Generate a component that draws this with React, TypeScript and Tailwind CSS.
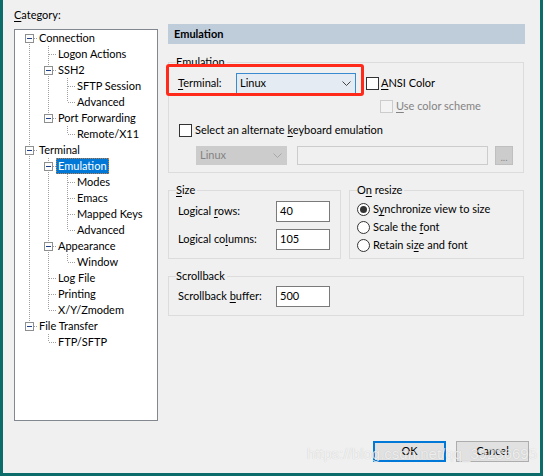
import React from "react";

type TreeNode = { label: string; children?: TreeNode[]; selected?: boolean };

const tree: TreeNode[] = [
  {
    label: "Connection",
    children: [
      { label: "Logon Actions" },
      { label: "SSH2", children: [{ label: "SFTP Session" }, { label: "Advanced" }] },
      { label: "Port Forwarding", children: [{ label: "Remote/X11" }] },
    ],
  },
  {
    label: "Terminal",
    children: [
      {
        label: "Emulation",
        selected: true,
        children: [{ label: "Modes" }, { label: "Emacs" }, { label: "Mapped Keys" }, { label: "Advanced" }],
      },
      { label: "Appearance", children: [{ label: "Window" }] },
      { label: "Log File" },
      { label: "Printing" },
      { label: "X/Y/Zmodem" },
    ],
  },
  { label: "File Transfer", children: [{ label: "FTP/SFTP" }] },
];

type Row = { node: TreeNode; depth: number; last: boolean; first: boolean; trail: boolean[] };

function flatten(nodes: TreeNode[], depth: number, trail: boolean[], out: Row[]): Row[] {
  nodes.forEach((n, i) => {
    const last = i === nodes.length - 1;
    out.push({ node: n, depth, last, first: depth === 0 && i === 0, trail });
    if (n.children) flatten(n.children, depth + 1, [...trail, !last], out);
  });
  return out;
}

const rows = flatten(tree, 0, [], []);
const DOT = "#a0a0a0";

function LineCell({ on }: { on: boolean }) {
  return (
    <svg width="19" height="16" className="shrink-0" shapeRendering="crispEdges">
      {on && <line x1="9.5" y1="0" x2="9.5" y2="16" stroke={DOT} strokeDasharray="1 1" />}
    </svg>
  );
}

function NodeCell({ row }: { row: Row }) {
  const top = row.first ? 8 : 0;
  const bottom = row.last ? 8 : 16;
  return (
    <svg width="19" height="16" className="shrink-0" shapeRendering="crispEdges">
      <line x1="9.5" y1={top} x2="9.5" y2={bottom} stroke={DOT} strokeDasharray="1 1" />
      <line x1="10" y1="8.5" x2="18" y2="8.5" stroke={DOT} strokeDasharray="1 1" />
      {row.node.children && (
        <>
          <rect x="5.5" y="4.5" width="8" height="8" fill="#fcfcfc" stroke="#8e8f8f" />
          <line x1="7" y1="8.5" x2="12" y2="8.5" stroke="#1e3f86" />
        </>
      )}
    </svg>
  );
}

function Tree() {
  return (
    <div className="h-[392px] w-[144px] border border-[#828790] bg-white pl-[5px]">
      {rows.map((r, i) => (
        <div key={i} className="flex h-[16px] items-center">
          {r.trail.map((on, j) => (
            <LineCell key={j} on={on} />
          ))}
          <NodeCell row={r} />
          <span
            className={`-ml-[2px] whitespace-nowrap border px-[1px] leading-[14px] ${
              r.node.selected
                ? "border-dotted border-[#c97c3c] bg-[#0078d7] text-white"
                : "border-transparent text-black"
            }`}
          >
            {r.node.label}
          </span>
        </div>
      ))}
    </div>
  );
}

function Mn({ children }: { children: React.ReactNode }) {
  return <span className="underline decoration-1 underline-offset-[2px]">{children}</span>;
}

function Check({ disabled }: { disabled?: boolean }) {
  return (
    <span
      className={`block h-[13px] w-[13px] shrink-0 border ${
        disabled ? "border-[#cccccc] bg-[#f3f3f3]" : "border-[#333333] bg-white"
      }`}
    />
  );
}

function Radio({ on }: { on?: boolean }) {
  return (
    <span className="flex h-[13px] w-[13px] shrink-0 items-center justify-center rounded-full border border-[#333333] bg-white">
      {on && <span className="h-[7px] w-[7px] rounded-full bg-[#333333]" />}
    </span>
  );
}

function Chevron({ color }: { color: string }) {
  return (
    <svg width="9" height="5" viewBox="0 0 9 5">
      <polyline points="0.5,0.5 4.5,4.5 8.5,0.5" fill="none" stroke={color} />
    </svg>
  );
}

function Group({
  title,
  className = "",
  children,
}: {
  title: React.ReactNode;
  className?: string;
  children: React.ReactNode;
}) {
  return (
    <fieldset className={`border border-[#dcdcdc] pl-[9px] ${className}`}>
      <legend className="-ml-[2px] pl-0 pr-[2px] leading-[16px]">{title}</legend>
      {children}
    </fieldset>
  );
}

function Field({ value }: { value: string }) {
  return (
    <div className="flex h-[21px] w-[54px] items-center border border-[#7a7a7a] bg-white pl-[3px]">{value}</div>
  );
}

export default function App() {
  return (
    <div className="relative flex h-[476px] w-[543px] bg-[#0b6c6a] font-['Lato','Noto_Sans',sans-serif] text-[11px] text-black">
      <div className="ml-[3px] flex h-[473px] w-[537px] flex-col bg-[#f0f0f0] pl-[11px] pt-[7px]">
        <div className="flex items-start gap-[10px]">
          <div className="flex flex-col">
            <div className="h-[16px] leading-[16px]">
              <Mn>C</Mn>ategory:
            </div>
            <div className="mt-[6px]">
              <Tree />
            </div>
          </div>

          <div className="flex w-[357px] flex-col pt-[17px]">
            <div className="flex h-[20px] items-center bg-[#bfcddb] pl-[6px] font-bold">Emulation</div>

            <Group title="Emulation" className="mt-[10px] w-[356px] pb-[7px]">
              <div className="relative mt-[3px] flex h-[21px] items-center">
                <div className="pointer-events-none absolute -left-[12px] -top-[9px] h-[32px] w-[198px] rounded-[3px] border-[3px] border-[#ff2a1a]" />
                <span className="w-[58px]">
                  <Mn>T</Mn>erminal:
                </span>
                <div className="flex h-[21px] w-[120px] items-center justify-between border border-[#3a8ad0] bg-[#e5ebf2] pl-[3px] pr-[4px]">
                  <span>Linux</span>
                  <Chevron color="#444444" />
                </div>
                <div className="ml-[10px] flex items-center gap-[2px]">
                  <Check />
                  <span>
                    <Mn>A</Mn>NSI Color
                  </span>
                </div>
              </div>

              <div className="ml-[202px] mt-[4px] flex h-[16px] items-center gap-[3px] text-[#838383]">
                <Check disabled />
                <span>
                  <Mn>U</Mn>se color scheme
                </span>
              </div>

              <div className="ml-[1px] mt-[8px] flex h-[16px] items-center gap-[3px]">
                <Check />
                <span>
                  Select an alternate <Mn>k</Mn>eyboard emulation
                </span>
              </div>

              <div className="ml-[18px] mt-[8px] flex h-[19px] items-center">
                <div className="flex h-[19px] w-[91px] items-center justify-between border border-[#cccccc] bg-[#cccccc] pl-[3px] pr-[4px] text-[#838383]">
                  <span>Linux</span>
                  <Chevron color="#a8a8a8" />
                </div>
                <div className="ml-[10px] h-[19px] w-[191px] border border-[#cccccc] bg-[#f0f0f0]" />
                <div className="ml-[7px] flex h-[19px] w-[18px] items-end justify-center border border-[#bfbfbf] bg-[#cccccc] pb-[2px] text-[10px] leading-[10px] text-[#8a8a8a]">
                  ...
                </div>
              </div>
            </Group>

            <div className="mt-[9px] flex gap-[8px]">
              <Group
                title={
                  <>
                    <Mn>S</Mn>ize
                  </>
                }
                className="w-[173px] pb-[8px]"
              >
                <div className="mt-[3px] flex h-[21px] items-center">
                  <span className="w-[98px]">
                    Logical <Mn>r</Mn>ows:
                  </span>
                  <Field value="40" />
                </div>
                <div className="mt-[7px] flex h-[21px] items-center">
                  <span className="w-[98px]">
                    Logical co<Mn>l</Mn>umns:
                  </span>
                  <Field value="105" />
                </div>
              </Group>

              <Group
                title={
                  <>
                    O<Mn>n</Mn> resize
                  </>
                }
                className="w-[175px] pb-[4px]"
              >
                <div className="-ml-[2px] mt-[2px] flex flex-col">
                  <div className="flex h-[18px] items-center gap-[3px]">
                    <Radio on />
                    <span>
                      S<Mn>y</Mn>nchronize view to size
                    </span>
                  </div>
                  <div className="flex h-[18px] items-center gap-[3px]">
                    <Radio />
                    <span>
                      Scale the <Mn>f</Mn>ont
                    </span>
                  </div>
                  <div className="flex h-[18px] items-center gap-[3px]">
                    <Radio />
                    <span>
                      Retain si<Mn>z</Mn>e and font
                    </span>
                  </div>
                </div>
              </Group>
            </div>

            <Group title="Scrollback" className="mt-[9px] w-[356px] pb-[8px]">
              <div className="mt-[2px] flex h-[21px] items-center">
                <span className="w-[98px]">
                  Scrollback <Mn>b</Mn>uffer:
                </span>
                <Field value="500" />
              </div>
            </Group>
          </div>
        </div>

        <div className="mt-[20px] flex justify-end gap-[10px] pr-[11px]">
          <button className="flex h-[21px] w-[73px] items-center justify-center border-2 border-[#0078d7] bg-[#e1e1e1]">
            OK
          </button>
          <button className="flex h-[21px] w-[73px] items-center justify-center border border-[#adadad] bg-[#e1e1e1]">
            Cancel
          </button>
        </div>
      </div>

      <div className="pointer-events-none absolute bottom-[13px] right-[6px] whitespace-nowrap font-['Liberation_Sans',sans-serif] text-[15px] leading-[18px] text-white/75 [text-shadow:0_0_1px_rgba(0,0,0,0.2)]">
        https://blog.csdn.net/qq_39236695
      </div>
    </div>
  );
}
